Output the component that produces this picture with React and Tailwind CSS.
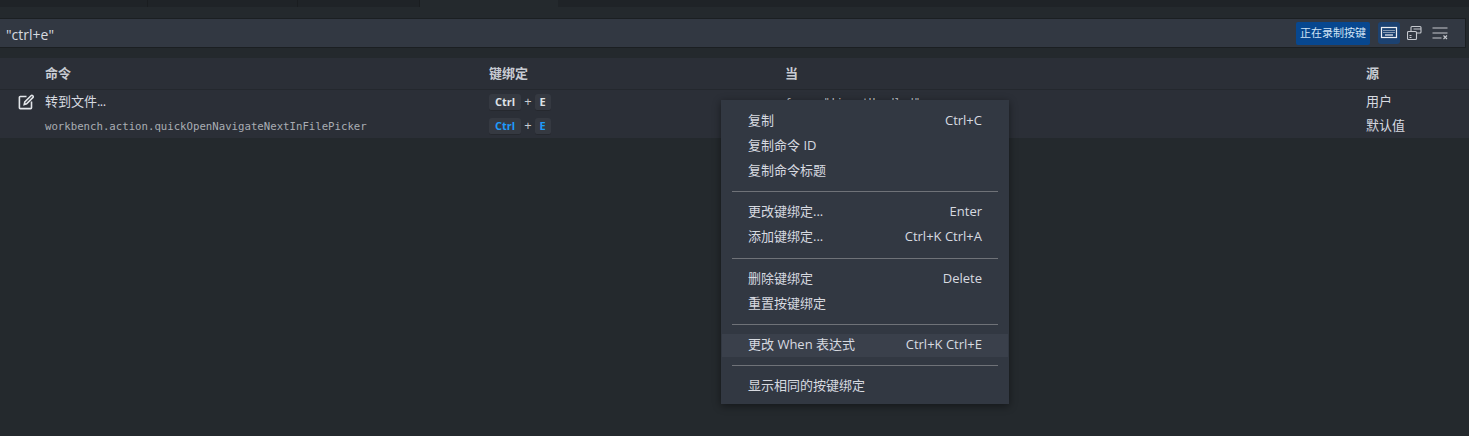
import React from "react";

const ui = { fontFamily: '"Open Sans", "Noto Sans CJK SC", sans-serif' };
const mono = { fontFamily: '"DejaVu Sans Mono", monospace' };

const Key = ({ children, blue, pad }) => (
  <span
    className={`inline-flex items-center h-[17px] pt-[1px] rounded-[3px] bg-[#353941] border-b border-[#25282e] text-[11px] font-bold ${pad} ${
      blue ? "text-[#1f9bfb]" : "text-[#dfe2e7]"
    }`}
  >
    {children}
  </span>
);

const Binding = ({ blue }) => (
  <div className="flex items-center gap-[3px] text-[#c8ccd3] text-[13px]">
    <Key blue={blue} pad="px-[6px]">Ctrl</Key>
    <span>+</span>
    <Key blue={blue} pad="px-[5px]">E</Key>
  </div>
);

const EditIcon = () => (
  <svg width="16" height="16" viewBox="0 0 16 16" fill="none" stroke="#e2e5e9" strokeWidth="1.6">
    <path d="M8.5 2.5H2.2a.8.8 0 0 0-.8.8v10.5a.8.8 0 0 0 .8.8h10.5a.8.8 0 0 0 .8-.8V7.5" />
    <path d="M6.2 10.6l.6-2.6 6.2-6.2a1.2 1.2 0 0 1 1.8 1.8L8.6 9.8z" />
  </svg>
);

const KeyboardIcon = () => (
  <svg width="18" height="16" viewBox="0 0 18 16" fill="none" stroke="#eef0f3">
    <rect x="1.5" y="2.5" width="15" height="10" strokeWidth="1.2" />
    <path d="M3.5 5.5h11M3.5 7.5h11" strokeWidth="1" strokeDasharray="1 1" />
    <path d="M5 10h8" strokeWidth="1.2" />
  </svg>
);

const SortIcon = () => (
  <svg width="16" height="16" viewBox="0 0 16 16" fill="none" stroke="#c5c8ce" strokeWidth="1.1">
    <rect x="0.5" y="6.5" width="9" height="8" rx="1" />
    <path d="M4 6V2.5a1 1 0 0 1 1-1h8a1 1 0 0 1 1 1V7a1 1 0 0 1-1 1h-3" />
    <path d="M6.5 4h7.5M2.5 10.5h2M2.5 12.5h2" />
  </svg>
);

const ClearIcon = () => (
  <svg width="16" height="16" viewBox="0 0 16 16" fill="none" stroke="#c5c8ce" strokeWidth="1.1">
    <path d="M0.5 3h15M0.5 8h15M0.5 13h9" />
    <path d="M11.5 10.5l3.5 3.5M15 10.5l-3.5 3.5" />
  </svg>
);

const MenuItem = ({ label, hint, active }) => (
  <div
    className={`flex items-center justify-between h-[23px] px-[26px] mx-[1px] text-[13px] text-[#d7dae0] ${
      active ? "mt-[1px] mb-[0.5px] bg-[#3a404b]" : "my-[1px]"
    }`}
  >
    <span>{label}</span>
    {hint && <span>{hint}</span>}
  </div>
);

const Sep = () => <div className="h-px bg-[#6f7278] mx-[11px] mt-[8px] mb-[7.5px]" />;

const Row = ({ children, className }) => (
  <div className={`flex items-center ${className}`}>{children}</div>
);

export default function App() {
  return (
    <div className="relative w-[1469px] h-[436px] overflow-hidden bg-[#24292d]" style={ui}>
      {/* tab strip */}
      <div className="flex h-[7px] bg-[#1f2327]">
        <div className="w-[148px] border-r border-[#1a1d20]" />
        <div className="w-[150px] border-r border-[#1a1d20]" />
        <div className="w-[122px] border-r border-[#1a1d20]" />
        <div className="w-[138px] bg-[#24292d]" />
      </div>

      {/* search bar */}
      <div className="flex items-center justify-between h-[30px] mt-[11px] mr-[3px] pl-[6px] bg-[#323842] border-y border-r border-[#1b1f22]">
        <span className="text-[14px] text-[#d7dae0] pt-[2px]">"ctrl+e"</span>
        <div className="flex items-center mr-[14px]">
          <span className="flex items-center h-[23px] px-[4px] rounded-[2px] bg-[#07478f] text-[11px] text-[#cfe3f5]">
            正在录制按键
          </span>
          <span className="flex items-center justify-center w-[22px] h-[22px] ml-[8px] rounded-[3px] bg-[#1c4271]">
            <KeyboardIcon />
          </span>
          <span className="flex items-center justify-center w-[22px] h-[22px] ml-[4px]">
            <SortIcon />
          </span>
          <span className="flex items-center justify-center w-[22px] h-[22px] ml-[3px]">
            <ClearIcon />
          </span>
        </div>
      </div>

      {/* table */}
      <div className="mt-[10px] bg-[#2b2f37] text-[13px] text-[#d7dae0]">
        <Row className="h-[32px] pt-[1px] border-b border-[#24282e] font-bold text-[#c8ccd3]">
          <div className="w-[489px] pl-[45px]">命令</div>
          <div className="w-[296px]">键绑定</div>
          <div className="w-[581px]">当</div>
          <div>源</div>
        </Row>
        <Row className="h-[24px]">
          <div className="w-[489px] flex items-center">
            <div className="w-[45px] flex justify-center pl-[7px]">
              <EditIcon />
            </div>
            <span>
              转到文件<span className="tracking-[-0.6px]">...</span>
            </span>
          </div>
          <div className="w-[296px]">
            <Binding />
          </div>
          <div className="w-[581px] pt-[2px] text-[10.7px] text-[#c8ccd3]" style={mono}>
            focus  "!inputHandled"
          </div>
          <div>用户</div>
        </Row>
        <Row className="h-[24px]">
          <div className="w-[489px] pl-[45px] pt-[2px] text-[10.7px] text-[#a9adb3]" style={mono}>
            workbench.action.quickOpenNavigateNextInFilePicker
          </div>
          <div className="w-[296px]">
            <Binding blue />
          </div>
          <div className="w-[581px]" />
          <div>默认值</div>
        </Row>
      </div>

      {/* context menu */}
      <div className="absolute left-[721px] top-[100px] w-[288px] h-[304px] pt-[8px] flex flex-col bg-[#323842] shadow-[0_2px_8px_rgba(0,0,0,0.45)]">
        <MenuItem label="复制" hint="Ctrl+C" />
        <MenuItem label="复制命令 ID" />
        <MenuItem label="复制命令标题" />
        <Sep />
        <MenuItem label="更改键绑定..." hint="Enter" />
        <MenuItem label="添加键绑定..." hint="Ctrl+K Ctrl+A" />
        <Sep />
        <MenuItem label="删除键绑定" hint="Delete" />
        <MenuItem label="重置按键绑定" />
        <Sep />
        <MenuItem label="更改 When 表达式" hint="Ctrl+K Ctrl+E" active />
        <Sep />
        <MenuItem label="显示相同的按键绑定" />
      </div>
    </div>
  );
}
